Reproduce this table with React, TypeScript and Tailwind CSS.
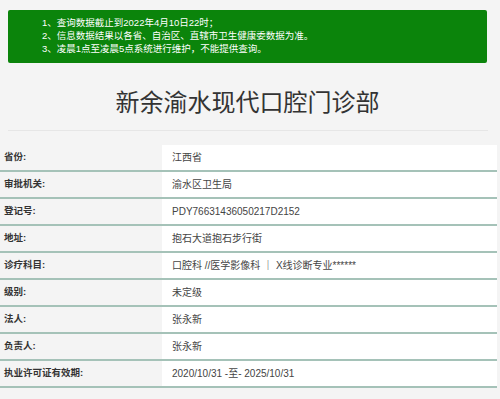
import React from 'react';

interface Row {
  label: string;
  value: string;
}

const notices = [
  '1、查询数据截止到2022年4月10日22时；',
  '2、信息数据结果以各省、自治区、直辖市卫生健康委数据为准。',
  '3、凌晨1点至凌晨5点系统进行维护，不能提供查询。',
];

const rows: Row[] = [
  { label: '省份:', value: '江西省' },
  { label: '审批机关:', value: '渝水区卫生局' },
  { label: '登记号:', value: 'PDY76631436050217D2152' },
  { label: '地址:', value: '抱石大道抱石步行街' },
  { label: '诊疗科目:', value: '口腔科 //医学影像科 ｜ X线诊断专业******' },
  { label: '级别:', value: '未定级' },
  { label: '法人:', value: '张永新' },
  { label: '负责人:', value: '张永新' },
  { label: '执业许可证有效期:', value: '2020/10/31 -至- 2025/10/31' },
];

const App: React.FC = () => {
  return (
    <div
      className="w-[500px] h-[399px] overflow-hidden bg-[#f4f4f4] text-[#333]"
      style={{ fontFamily: '"Liberation Sans", "Noto Sans CJK SC", sans-serif' }}
    >
      {/* 提示信息 */}
      <div className="mx-[8px] mt-[10px] w-[479px] h-[53px] bg-[#0b840b] rounded-[2px] pl-[34px] pt-[6px] text-white text-[9.5px] leading-[13px]">
        {notices.map((n, i) => (
          <div key={i}>{n}</div>
        ))}
      </div>

      {/* 标题 */}
      <h1 className="mt-[22px] h-[36px] leading-[36px] text-center text-[24px] font-normal text-[#333] w-[495px]">
        新余渝水现代口腔门诊部
      </h1>
      <div className="mx-[8px] mt-[9px] w-[480px] h-px bg-[#e6e6e6]" />

      {/* 详细信息 */}
      <div className="mt-[14px] w-[497px]">
        {rows.map((row, i) => (
          <div key={i} className="flex h-[27px] border-b-2 border-[#a5c2b8]">
            <div className="w-[162px] pl-[4px] flex items-center text-[9.5px] font-bold text-[#333]">
              {row.label}
            </div>
            <div className="flex-1 bg-white pl-[10px] flex items-center text-[10px] text-[#444]">
              {row.value}
            </div>
          </div>
        ))}
      </div>
    </div>
  );
};

export default App;
